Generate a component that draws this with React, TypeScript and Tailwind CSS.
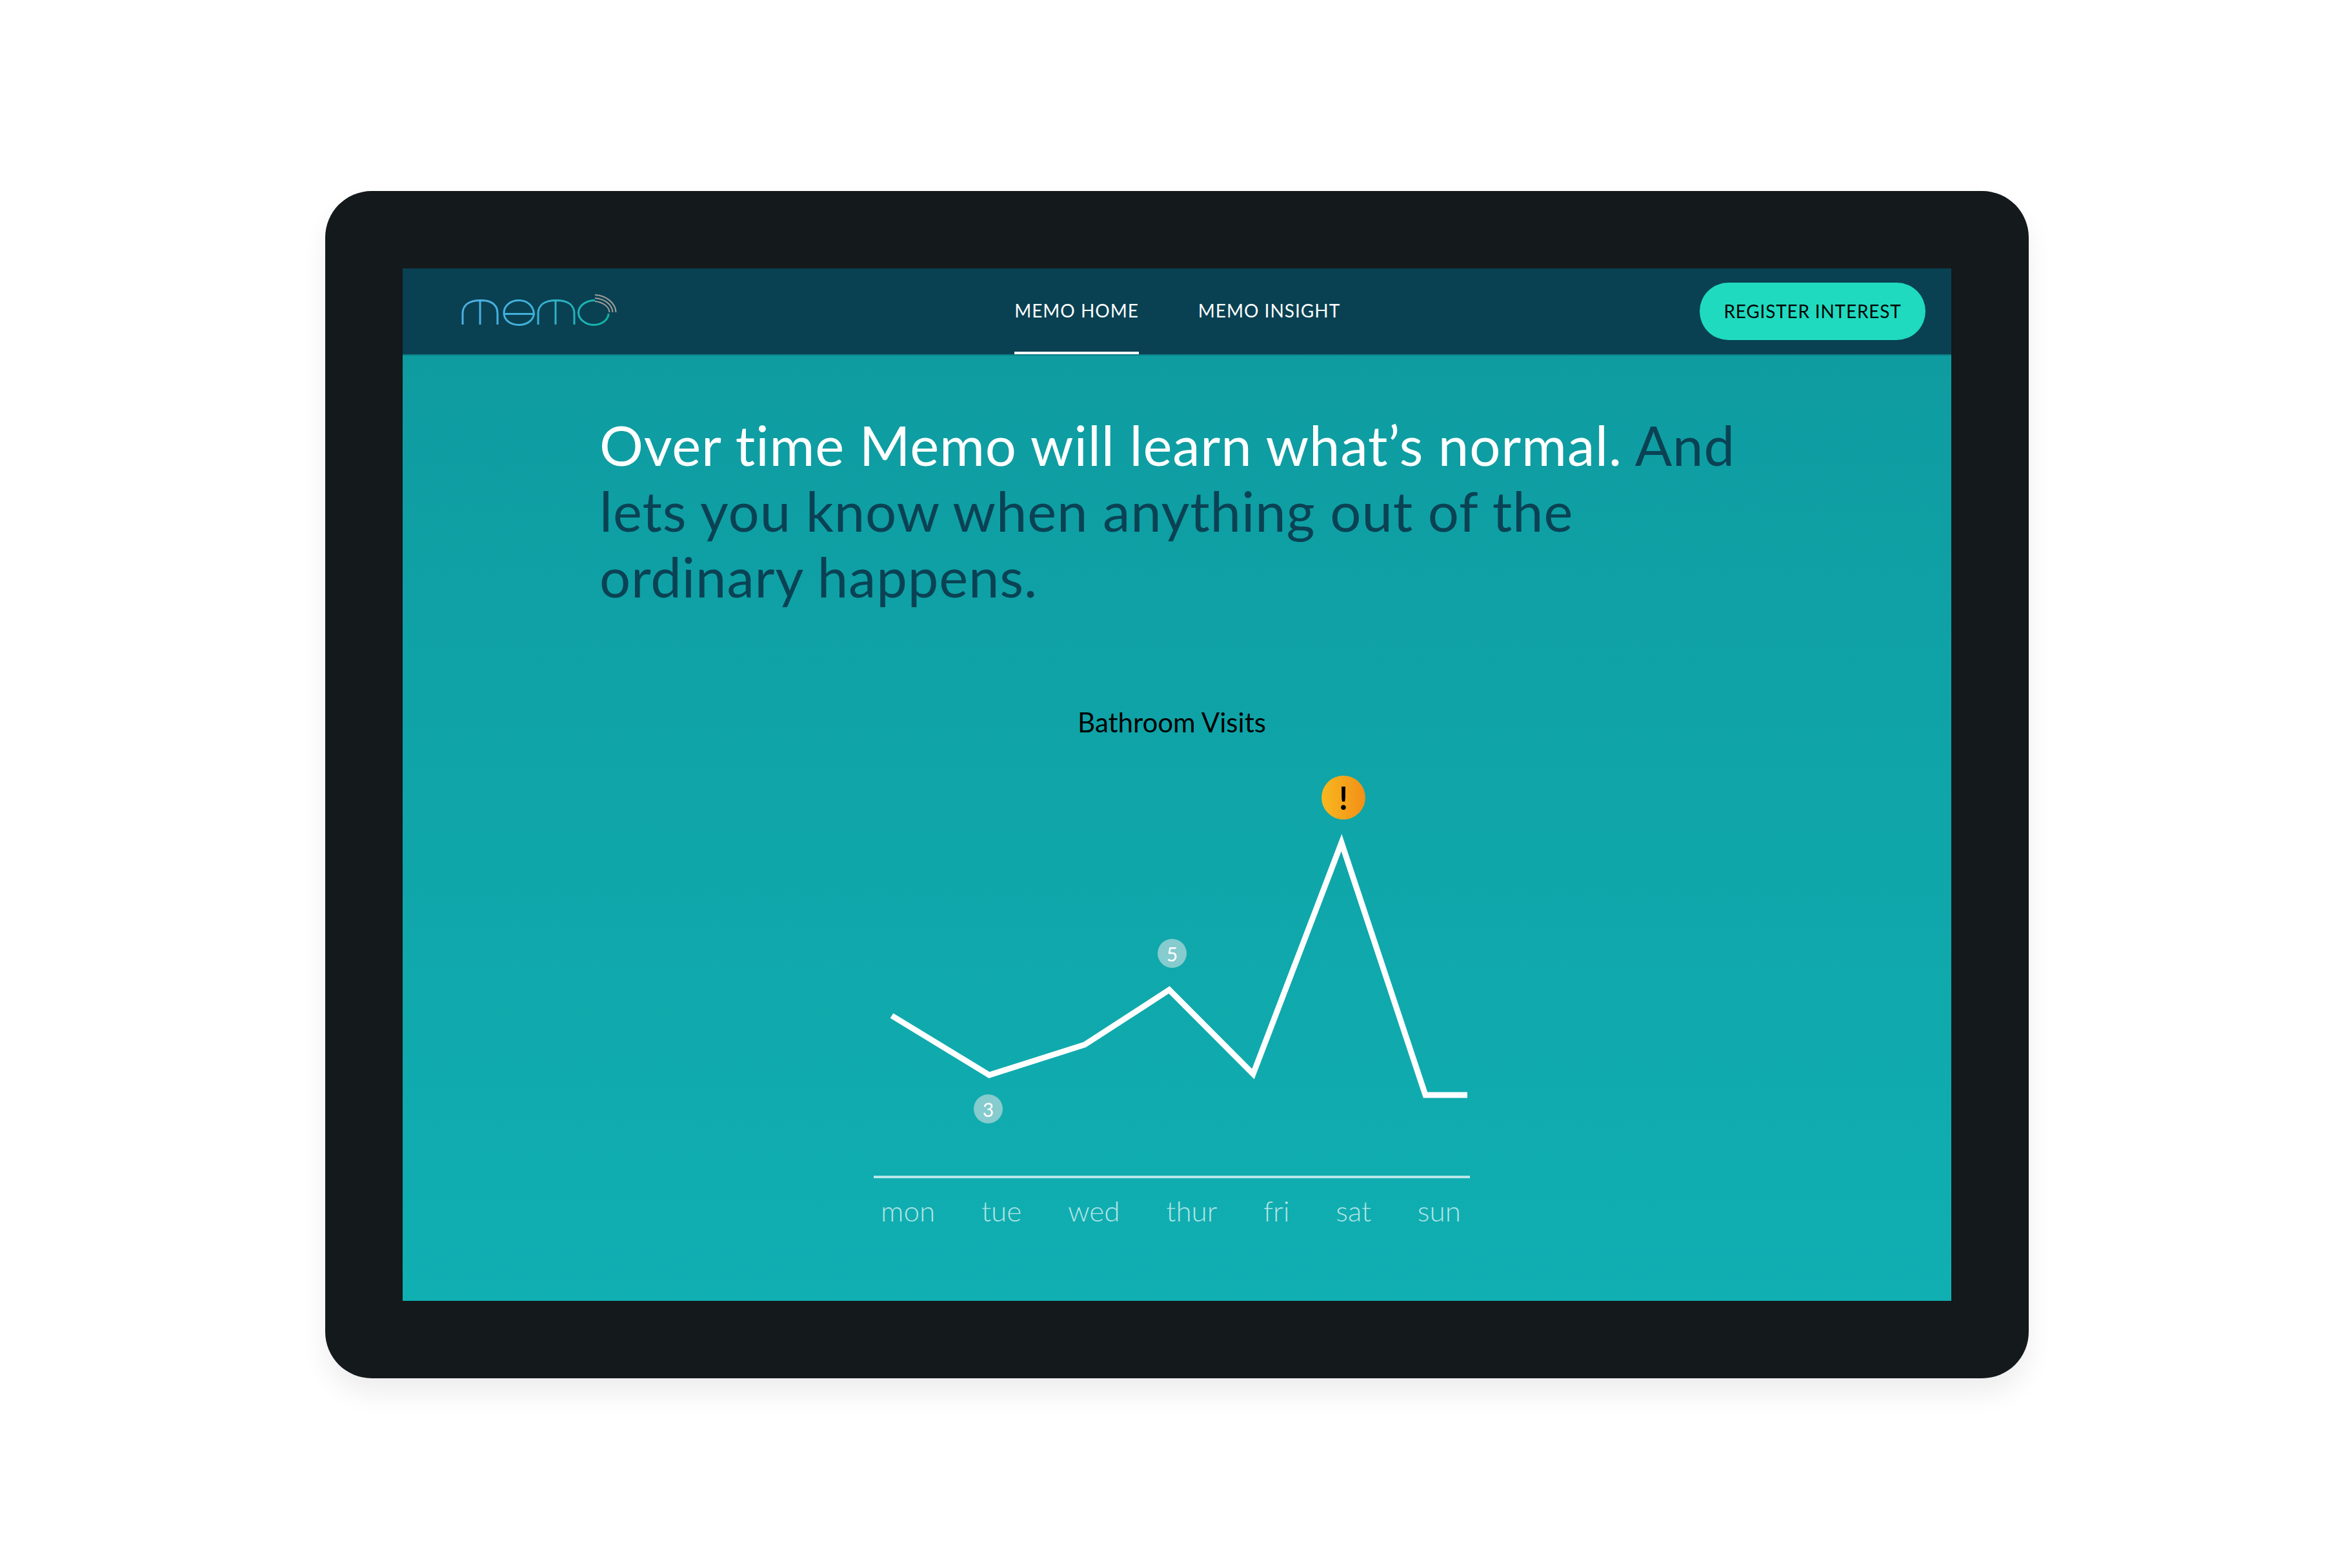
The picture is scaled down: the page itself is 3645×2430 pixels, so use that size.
import React from 'react';

const days = ['mon', 'tue', 'wed', 'thur', 'fri', 'sat', 'sun'];

const MemoLogo = () => (
  <svg width="244" height="52" viewBox="0 0 244 52" fill="none" className="mb-[6px] block">
    <defs>
      <linearGradient id="memoGrad" x1="0" y1="0" x2="232" y2="0" gradientUnits="userSpaceOnUse">
        <stop offset="0" stopColor="#4fb0e6" />
        <stop offset="0.45" stopColor="#3fb0d8" />
        <stop offset="1" stopColor="#0db5a4" />
      </linearGradient>
    </defs>
    <g stroke="url(#memoGrad)" strokeWidth="3">
      <path d="M2 49V32C2 18 13 11.500 30 11.500C47 11.500 56 18 56 32V49M29 11.500V49" />
      <path d="M66 32.500H112.500C112 20 102 11.500 89 11.500C76 11.500 66 20 66 31C66 42 76 49.500 89 49.500C102 49.500 112 42 112.500 31.500" />
      <path d="M119 49V32C119 18 130 11.500 147 11.500C164 11.500 175 18 175 32V49M146 11.500V49" />
      <path d="M207 11.500C193 11.500 181.500 20 181.500 30.500C181.500 41 193 49.500 205 49.500C218 49.500 228 41 228 32" />
    </g>
    <g stroke="#a09e9a" strokeWidth="2">
      <path d="M207 3C225 4 239 16 239.500 30" />
      <path d="M207 8C222 9 234 18 234.500 30" />
      <path d="M207 13C219 14 229 21 229.500 30" />
    </g>
  </svg>
);

const Chart = () => (
  <div className="relative mt-[42px] h-[636px] w-[924px]">
    <svg width="924" height="636" viewBox="0 0 924 636" fill="none" className="block">
      <polyline
        points="28,388 179,480 327,433 458,348 588,478.500 725,120 855,511 920,511"
        stroke="#ffffff"
        strokeWidth="9"
      />
    </svg>
    <div className="absolute left-[694px] top-[16px] flex h-[68px] w-[68px] items-center justify-center rounded-full bg-gradient-to-r from-[#f7b81f] to-[#f38f17] text-[50px] font-bold leading-none text-black">
      !
    </div>
    <div className="absolute left-[440px] top-[269px] flex h-[45px] w-[45px] items-center justify-center rounded-full bg-[#86cbcd] text-[30px] leading-none text-white">
      5
    </div>
    <div className="absolute left-[155px] top-[510px] flex h-[45px] w-[45px] items-center justify-center rounded-full bg-[#86cbcd] text-[30px] leading-none text-white">
      3
    </div>
  </div>
);

export default function App() {
  return (
    <div className="h-[2430px] w-[3645px] bg-white pl-[504px] pt-[296px] font-['Lato',sans-serif]">
      <div className="h-[1840px] w-[2640px] rounded-[72px] bg-[#14191c] p-[120px] shadow-[0_24px_40px_rgba(0,0,0,0.07)]">
        <div className="h-[1600px] w-[2400px] bg-gradient-to-b from-[#0e9a9f] to-[#10afb2]">
          <header className="relative flex h-[133px] items-center bg-[#094152] pl-[91px] pr-[40px] shadow-[0_2px_0_rgba(9,65,82,0.35)]">
            <MemoLogo />
            <nav className="ml-[613px] flex h-full gap-[91px] whitespace-nowrap text-[28px] tracking-[1px] text-white">
              <a className="flex h-full w-[193px] items-center justify-center border-b-[4px] border-white">MEMO HOME</a>
              <a className="flex h-full w-[222px] items-center justify-center border-b-[4px] border-transparent">MEMO INSIGHT</a>
            </nav>
            <button className="ml-auto h-[89px] w-[350px] rounded-full bg-[#1fdabf] pb-[2px] text-[28px] tracking-[0.8px] text-black">
              REGISTER INTEREST
            </button>
          </header>

          <h1 className="ml-[305px] mt-[89px] w-[1850px] text-[85px] font-normal leading-[102px] tracking-[0.9px] text-[#0a4254]">
            <span className="text-white">Over time Memo will learn what’s normal.</span> And
            <br />
            lets you know when anything out of the
            <br />
            ordinary happens.
          </h1>

          <div className="ml-[730px] mt-[150px] w-[924px]">
            <p className="text-center text-[42px] leading-[50px] text-black">Bathroom Visits</p>
            <Chart />
            <div className="h-[4px] bg-white/70" />
            <div className="mt-[25px] flex justify-between pl-[11px] pr-[14px] text-[44px] font-light leading-[50px] text-white/70">
              {days.map(day => (
                <span key={day}>{day}</span>
              ))}
            </div>
          </div>
        </div>
      </div>
    </div>
  );
}
